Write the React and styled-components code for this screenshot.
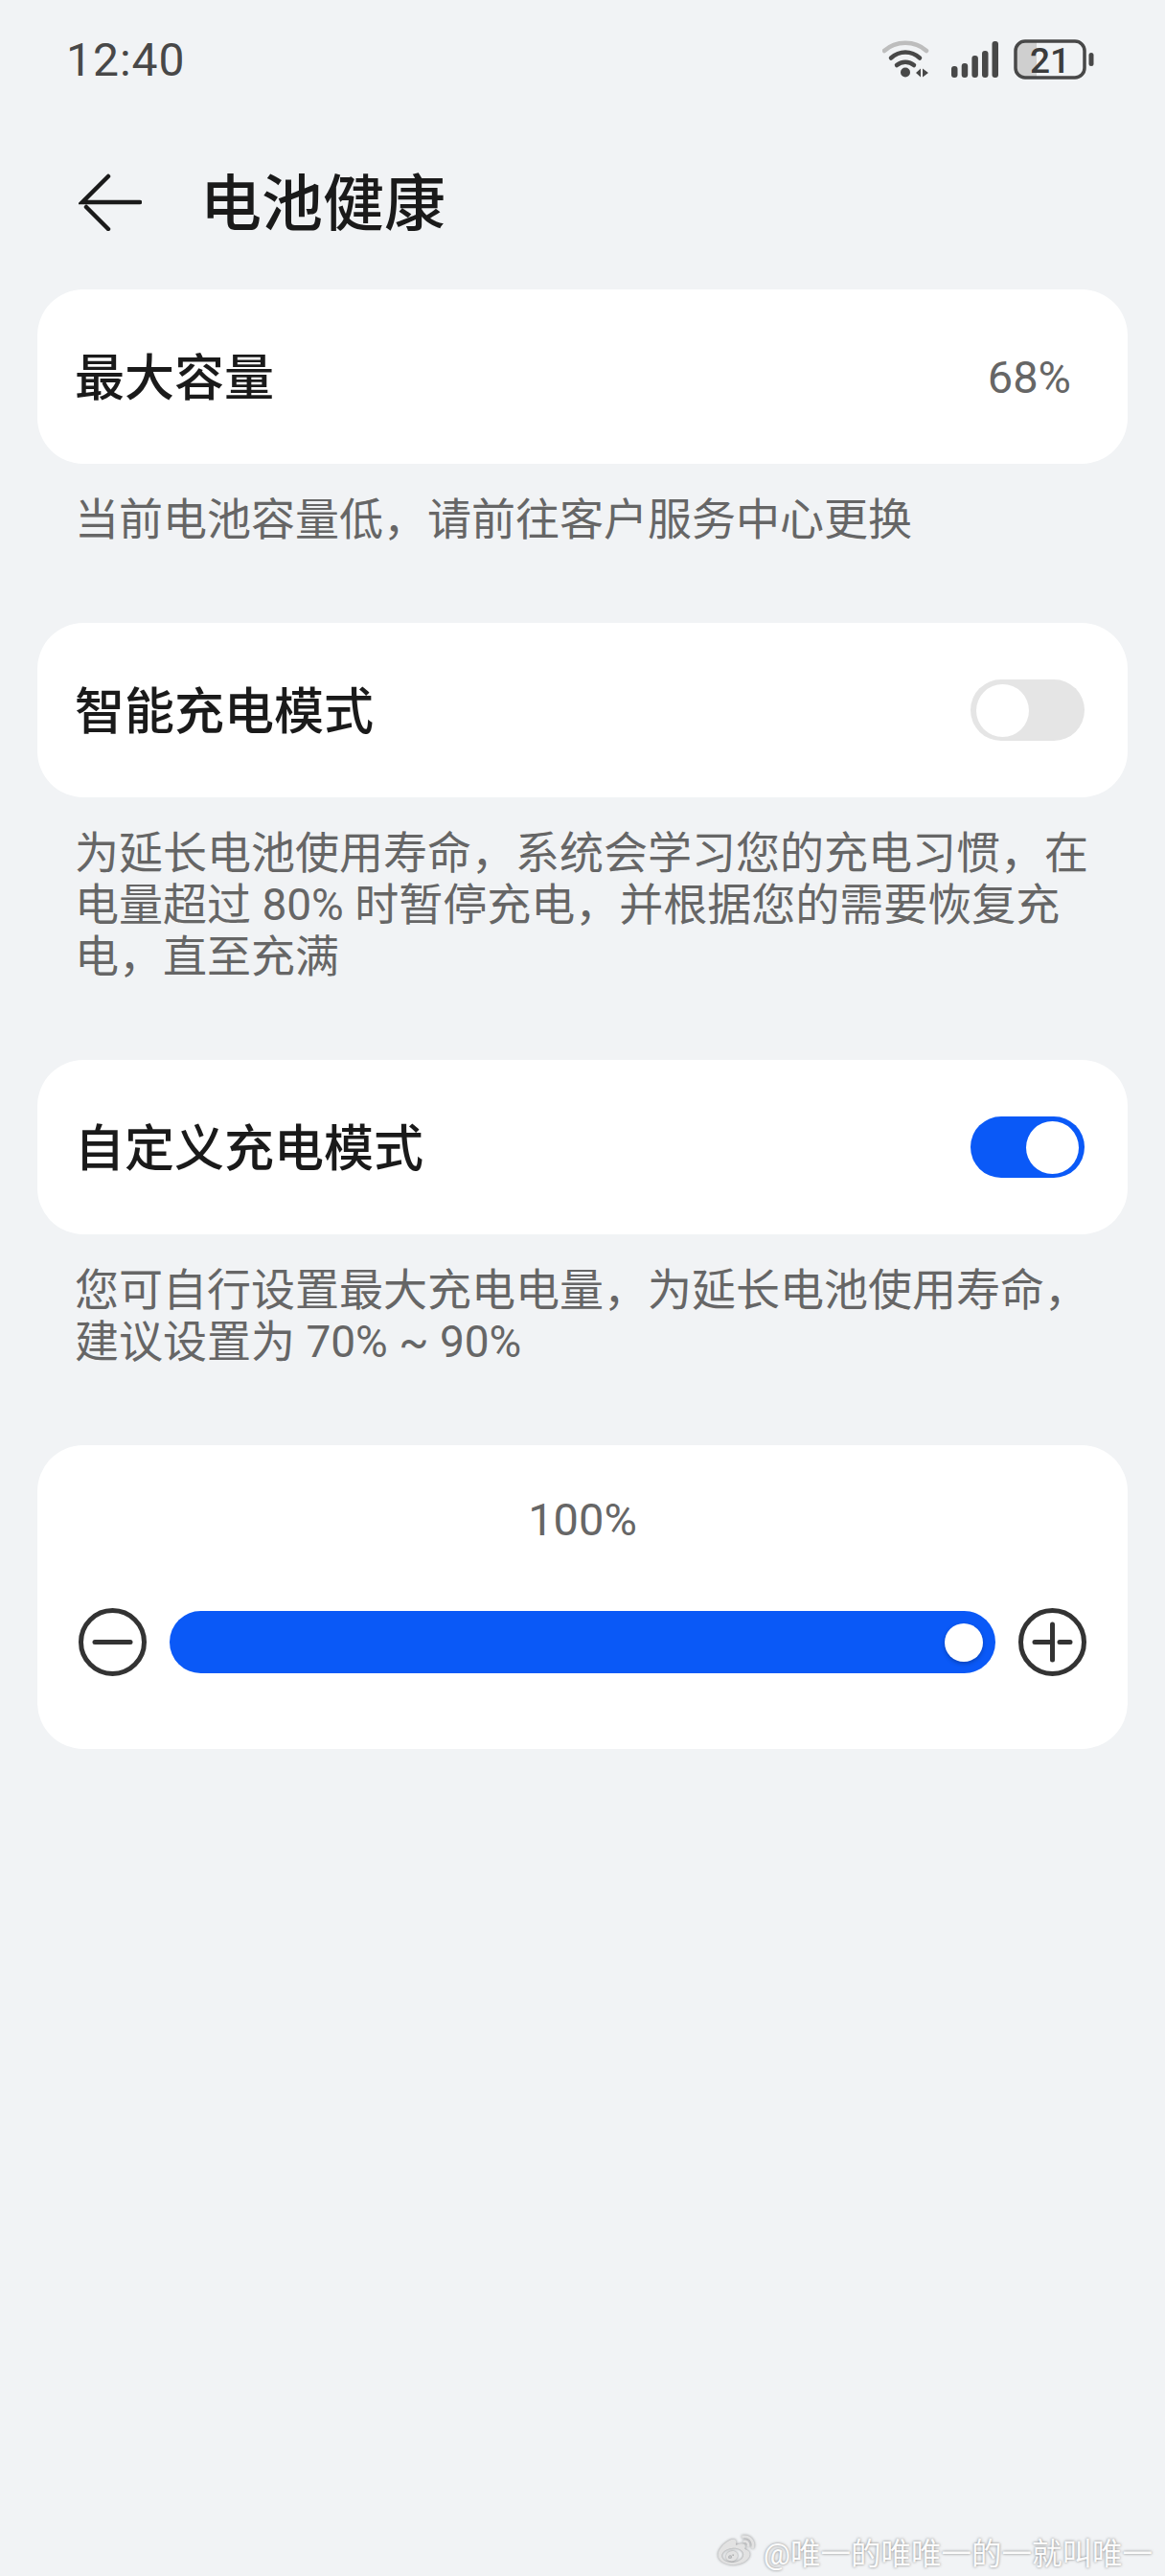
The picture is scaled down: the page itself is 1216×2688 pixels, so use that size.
import React from 'react';
import styled, { createGlobalStyle } from 'styled-components';
import { FaWeibo } from 'react-icons/fa';

const GlobalStyle = createGlobalStyle`
  html, body { margin: 0; padding: 0; background: #f1f3f5; }
  body { font-family: "Roboto", "Noto Sans CJK SC", sans-serif; }
`;

const Page = styled.div`
  width: 1216px;
  height: 2688px;
  position: relative;
  background: #f1f3f5;
  overflow: hidden;
  display: flex;
  flex-direction: column;
`;

const StatusBar = styled.div`
  height: 124px;
  padding: 0 74px 0 69px;
  display: flex;
  justify-content: space-between;
  align-items: center;
`;

const Clock = styled.div`
  font-size: 48px;
  color: #484848;
  letter-spacing: 1px;
`;

const StatusIcons = styled.div`
  display: flex;
  align-items: center;
  gap: 16px;
`;

const Header = styled.div`
  display: flex;
  align-items: center;
  gap: 61px;
  height: 100px;
  margin: 37px 0 41px;
  padding-left: 82px;
`;

const Title = styled.div`
  font-size: 64px;
  font-weight: 500;
  color: #1a1a1a;
  padding-bottom: 8px;
`;

const Card = styled.div`
  margin: 0 39px;
  height: 182px;
  border-radius: 48px;
  background: #fff;
  display: flex;
  align-items: center;
  justify-content: space-between;
  padding: 0 45px 0 39px;
`;

const RowLabel = styled.div`
  font-size: 52px;
  font-weight: 500;
  color: #1a1a1a;
  padding-bottom: 6px;
`;

const RowValue = styled.div`
  font-size: 47px;
  color: #666;
  margin-right: 14px;
`;

const Note = styled.div`
  margin: 31px 39px 81px;
  padding: 0 37px 0 39px;
  font-size: 46px;
  line-height: 54px;
  color: #666;
`;

const Switch = styled.div`
  width: 119px;
  height: 64px;
  box-sizing: border-box;
  border-radius: 32px;
  background: ${p => (p.$on ? '#0a59f7' : '#e5e5e5')};
  display: flex;
  align-items: center;
  justify-content: ${p => (p.$on ? 'flex-end' : 'flex-start')};
  padding: 0 6px;
`;

const Knob = styled.div`
  width: 55px;
  height: 55px;
  border-radius: 50%;
  background: #fff;
`;

const SliderCard = styled.div`
  margin: 0 39px;
  height: 317px;
  border-radius: 48px;
  background: #fff;
  display: flex;
  flex-direction: column;
  align-items: center;
  padding: 0 43px;
  box-sizing: border-box;
`;

const SliderValue = styled.div`
  font-size: 47px;
  color: #666;
  margin-top: 51px;
  line-height: 54px;
`;

const SliderRow = styled.div`
  margin-top: 65px;
  display: flex;
  align-items: center;
  gap: 24px;
  width: 100%;
`;

const Track = styled.div`
  flex: 1;
  height: 65px;
  border-radius: 33px;
  background: #0a59f7;
  display: flex;
  align-items: center;
  justify-content: flex-end;
  padding-right: 13px;
`;

const Thumb = styled.div`
  width: 40px;
  height: 40px;
  border-radius: 50%;
  background: #fff;
  box-shadow: 0 2px 4px rgba(0, 0, 0, 0.25);
`;

const Watermark = styled.div`
  position: absolute;
  right: 13px;
  top: 2636px;
  height: 52px;
  font-size: 31.5px;
  color: #fbfbfb;
  text-shadow: 0 0 3px rgba(0, 0, 0, 0.5);
  display: flex;
  align-items: center;
  gap: 7px;
`;

const WeiboLogo = styled(FaWeibo)`
  width: 43px;
  height: 38px;
  color: #e2e2e2;
  filter: drop-shadow(0 0 1.5px rgba(0, 0, 0, 0.45));
`;

function RoundIcon({ plus }) {
  return (
    <svg width="71" height="71" viewBox="0 0 71 71" fill="none" stroke="#333" strokeWidth="5" strokeLinecap="round">
      {/* the plus has a small break right of the vertical stroke in the reference */}
      <circle cx="35.5" cy="35.5" r="33" />
      {plus ? (
        <path d="M17 35.5h16M43 35.5h11M35.5 17v37" />
      ) : (
        <path d="M17 35.5h37" />
      )}
    </svg>
  );
}

function WifiIcon() {
  return (
    <svg width="56" height="40" viewBox="0 0 56 40" fill="none" strokeWidth="4.5" strokeLinecap="round">
      <path d="M2 11C14 0 34 0 46 11" stroke="#bdbdbd" />
      <path d="M9 18.5C18 10.5 30 10.5 39 18.5" stroke="#484848" />
      <path d="M15 26C20 21.5 28 21.5 33 26" stroke="#484848" />
      <circle cx="24" cy="33.5" r="5" fill="#484848" />
      <path d="M35 34l5-4.500v9zM42 29.500l6 4.500-6 4.500z" fill="#484848" />
    </svg>
  );
}

function SignalIcon() {
  return (
    <svg width="49" height="40" viewBox="0 0 49 40" fill="#484848">
      <rect x="0" y="27" width="6.500" height="12" rx="3" />
      <rect x="10.700" y="24" width="6.500" height="15" rx="3" />
      <rect x="21.400" y="16" width="6.500" height="23" rx="3" />
      <rect x="32" y="11" width="6.500" height="28" rx="3" />
      <rect x="42.500" y="1" width="6.500" height="38" rx="3" />
    </svg>
  );
}

function BatteryIcon() {
  return (
    <svg width="84" height="42" viewBox="0 0 84 42">
      <path d="M12 3H24V39H12A9 9 0 0 1 3 30V12A9 9 0 0 1 12 3Z" fill="#cfcfcf" />
      <rect x="2" y="2" width="72" height="38" rx="10" fill="none" stroke="#484848" strokeWidth="3.500" />
      <rect x="78.500" y="14" width="5" height="14" rx="2.500" fill="#484848" />
      <text x="38" y="34.500" fontSize="37" fontWeight="500" textAnchor="middle" fill="#3c3c3c" fontFamily="Roboto">21</text>
    </svg>
  );
}

export default function App() {
  return (
    <Page>
      <GlobalStyle />
      <StatusBar>
        <Clock>12:40</Clock>
        <StatusIcons>
          <WifiIcon />
          <SignalIcon />
          <BatteryIcon />
        </StatusIcons>
      </StatusBar>
      <Header>
        <svg width="66" height="60" viewBox="0 0 66 60" fill="none" stroke="#1a1a1a" strokeWidth="4.500" strokeLinecap="round">
          <path d="M31 3L4 30h60M8 35l23 23" />
        </svg>
        <Title>电池健康</Title>
      </Header>
      <Card>
        <RowLabel>最大容量</RowLabel>
        <RowValue>68%</RowValue>
      </Card>
      <Note>当前电池容量低，请前往客户服务中心更换</Note>
      <Card>
        <RowLabel>智能充电模式</RowLabel>
        <Switch><Knob /></Switch>
      </Card>
      <Note>为延长电池使用寿命，系统会学习您的充电习惯，在电量超过 80% 时暂停充电，并根据您的需要恢复充电，直至充满</Note>
      <Card>
        <RowLabel>自定义充电模式</RowLabel>
        <Switch $on><Knob /></Switch>
      </Card>
      <Note>您可自行设置最大充电电量，为延长电池使用寿命，建议设置为 70% ~ 90%</Note>
      <SliderCard>
        <SliderValue>100%</SliderValue>
        <SliderRow>
          <RoundIcon />
          <Track><Thumb /></Track>
          <RoundIcon plus />
        </SliderRow>
      </SliderCard>
      <Watermark><WeiboLogo />@唯一的唯唯一的一就叫唯一</Watermark>
    </Page>
  );
}
